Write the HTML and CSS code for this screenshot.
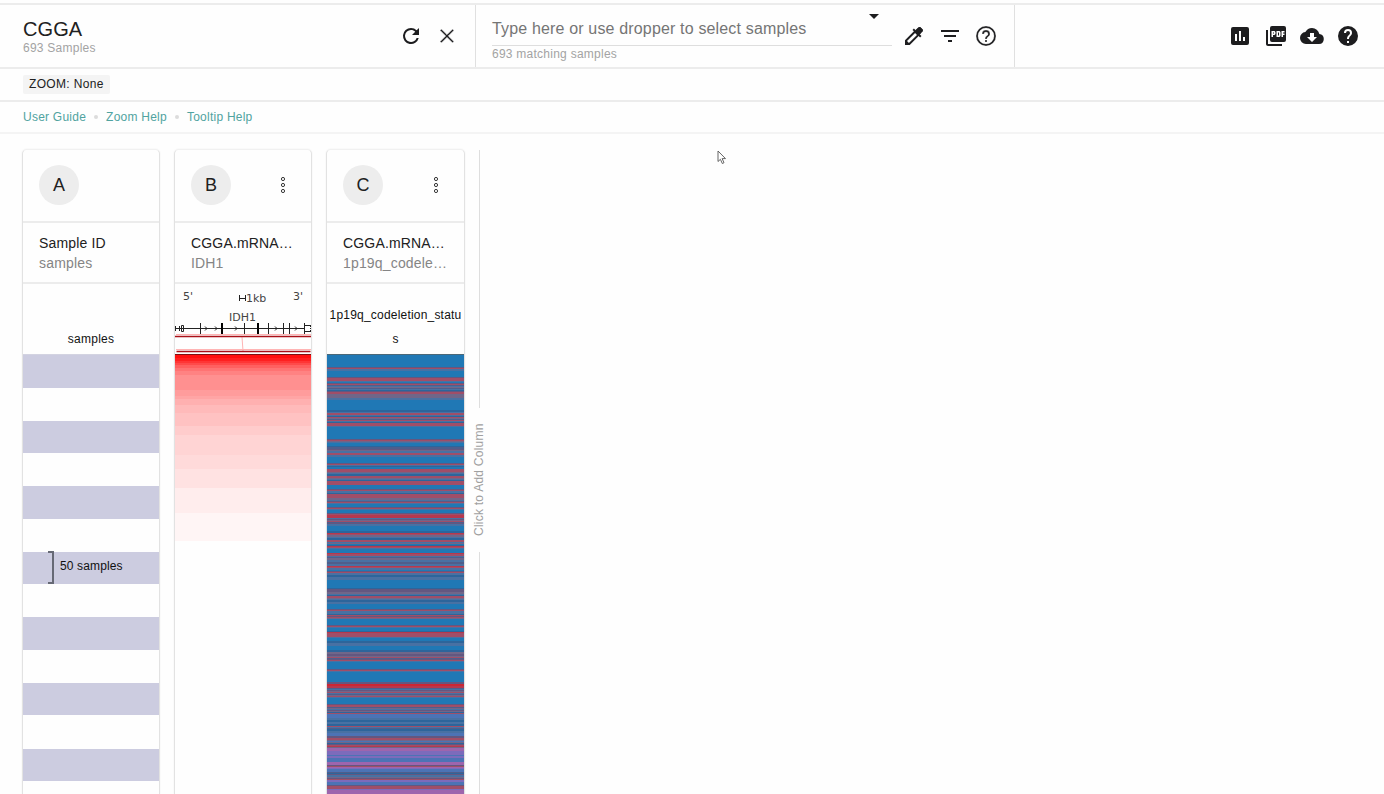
FILE: index.html
```html
<!DOCTYPE html>
<html lang="en">
<head>
<meta charset="utf-8">
<title>CGGA</title>
<link rel="stylesheet" href="styles.css">
</head>
<body>
<header class="appbar">
  <section class="cohort">
    <div class="cohort-text"><h1 class="cohort-name">CGGA</h1><div class="caption">693 Samples</div></div>
    <div class="icons">
      <svg class="icon" viewBox="0 0 24 24"><path d="M17.65 6.35A7.958 7.958 0 0 0 12 4a8 8 0 1 0 7.73 10h-2.08A6 6 0 1 1 12 6c1.66 0 3.14.69 4.22 1.78L13 11h7V4l-2.35 2.35z"/></svg>
      <svg class="icon close" viewBox="0 0 24 24"><path d="M19 6.41 17.59 5 12 10.59 6.41 5 5 6.41 10.59 12 5 17.59 6.41 19 12 13.41 17.59 19 19 17.59 13.41 12z"/></svg>
    </div>
  </section>
  <section class="search">
    <div class="field">
      <div class="field-input"><span class="placeholder">Type here or use dropper to select samples</span><i class="caret"></i></div>
      <div class="caption">693 matching samples</div>
    </div>
    <div class="icons">
      <svg class="icon" viewBox="0 0 24 24"><path d="M20.71 5.63l-2.34-2.34a1 1 0 0 0-1.41 0l-3.12 3.12-1.93-1.91-1.41 1.41 1.42 1.42L3 16.25V21h4.75l8.92-8.92 1.42 1.42 1.41-1.41-1.92-1.92 3.12-3.12c.4-.4.4-1.03.01-1.42zM6.92 19 5 17.08l8.06-8.06 1.92 1.92L6.92 19z"/><path d="M13 6.500l3.500-3.200h2l2 2v2L17.500 11z"/></svg>
      <svg class="icon" viewBox="0 0 24 24"><path d="M10 18h4v-2h-4v2zM3 6v2h18V6H3zm3 7h12v-2H6v2z"/></svg>
      <svg class="icon help" viewBox="0 0 24 24"><path d="M11 18h2v-2h-2v2zm1-16a10 10 0 1 0 0 20 10 10 0 0 0 0-20zm0 18a8 8 0 1 1 0-16 8 8 0 0 1 0 16zm0-14a4 4 0 0 0-4 4h2a2 2 0 1 1 4 0c0 2-3 1.75-3 5h2c0-2.25 3-2.5 3-5a4 4 0 0 0-4-4z"/></svg>
    </div>
  </section>
  <section class="actions">
    <svg class="icon" viewBox="0 0 24 24"><path d="M19 3H5a2 2 0 0 0-2 2v14a2 2 0 0 0 2 2h14a2 2 0 0 0 2-2V5a2 2 0 0 0-2-2zM9 17H7v-7h2v7zm4 0h-2V7h2v10zm4 0h-2v-4h2v4z"/></svg>
    <svg class="icon" viewBox="0 0 24 24"><path d="M20 2H8a2 2 0 0 0-2 2v12a2 2 0 0 0 2 2h12a2 2 0 0 0 2-2V4a2 2 0 0 0-2-2zm-8.5 7.5c0 .83-.67 1.5-1.5 1.5H9v2H7.500V7H10c.83 0 1.500.67 1.500 1.500v1zm5 2c0 .83-.67 1.500-1.500 1.500h-2.500V7H15c.83 0 1.500.67 1.500 1.500v3zm4-3H19v1h1.500V11H19v2h-1.500V7h3v1.500zM9 9.500h1v-1H9v1zM4 6H2v14c0 1.100.9 2 2 2h14v-2H4V6zm10 5.500h1v-3h-1v3z"/></svg>
    <svg class="icon" viewBox="0 0 24 24"><path d="M19.350 10.040A7.490 7.490 0 0 0 12 4C9.110 4 6.600 5.640 5.350 8.040A5.994 5.994 0 0 0 0 14a6 6 0 0 0 6 6h13a5 5 0 0 0 .35-9.960zM17 13l-5 5-5-5h3V9h4v4h3z"/></svg>
    <svg class="icon" viewBox="0 0 24 24"><path d="M12 2a10 10 0 1 0 0 20 10 10 0 0 0 0-20zm1 17h-2v-2h2v2zm2.070-7.750-.9.920C13.450 12.900 13 13.500 13 15h-2v-.5c0-1.100.45-2.100 1.170-2.830l1.240-1.260c.37-.36.59-.86.590-1.410a2 2 0 0 0-4 0H8a4 4 0 0 1 8 0c0 .88-.36 1.680-.93 2.250z"/></svg>
  </section>
</header>
<div class="zoombar"><span class="chip">ZOOM: None</span></div>
<nav class="links"><a>User Guide</a><i class="dot"></i><a>Zoom Help</a><i class="dot"></i><a>Tooltip Help</a></nav>
<main class="sheet">
  <article class="card">
    <div class="card-head"><span class="avatar">A</span></div>
    <div class="card-title"><div class="title">Sample ID</div><div class="subtitle">samples</div></div>
    <div class="legend legend-samples">samples</div>
    <div class="plot bands"><div class="scale"><i class="bracket"></i><span>50 samples</span></div></div>
  </article>
  <article class="card">
    <div class="card-head"><span class="avatar">B</span><svg class="menu" viewBox="0 0 6 18"><circle cx="3" cy="3" r="1.600"/><circle cx="3" cy="9" r="1.600"/><circle cx="3" cy="15" r="1.600"/></svg></div>
    <div class="card-title"><div class="title">CGGA.mRNA…</div><div class="subtitle">IDH1</div></div>
    <div class="legend">
      <svg class="gene" viewBox="175 284 136 70">
        <g class="gene-text"><text x="183" y="300">5'</text><text x="246" y="302">1kb</text><text x="293" y="300">3'</text><text x="229" y="321">IDH1</text></g>
        <path class="thin" d="M239.500 295v6M239 298.500h7M245.500 295v6M175 328.500h130M175.500 326v5M179.500 326v5M181.500 325.500h2v6h-2zM200.500 323v11M244.500 323v11M268.500 323v11M283.500 323v11M289.500 323v11M304.500 323v11M305 325.500h6M305 331.500h6M310.500 325v2M310.500 328v1M310.500 330v2M205 326.500l2 2-2 2M215 326.500l2 2-2 2M235 326.500l2 2-2 2M275 326.500l2 2-2 2M295 326.500l2 2-2 2"/>
        <path class="thick" d="M222 323v11M258 323v11"/>
        <path class="link" d="M242 337l1 14M176 334.500h135M176 349.500h135"/>
        <path class="edge" d="M175 336.500h136M176.500 351.500h134"/>
      </svg>
    </div>
    <div class="plot heat"></div>
  </article>
  <article class="card card-wide">
    <div class="card-head"><span class="avatar">C</span><svg class="menu" viewBox="0 0 6 18"><circle cx="3" cy="3" r="1.600"/><circle cx="3" cy="9" r="1.600"/><circle cx="3" cy="15" r="1.600"/></svg></div>
    <div class="card-title"><div class="title">CGGA.mRNA…</div><div class="subtitle">1p19q_codele…</div></div>
    <div class="legend legend-codeletion">1p19q_codeletion_statu<br>s</div>
    <canvas class="plot" id="codeletion" width="137" height="440"></canvas>
  </article>
  <aside class="add"><i class="rule rule-top"></i><span class="add-label">Click to Add Column</span><i class="rule rule-rest"></i></aside>
</main>
<svg class="pointer" viewBox="0 0 10 15"><path d="M1 1v10.500l2.400-2.200 1.900 4.200 1.700-.8-1.900-4.100H8.500z"/></svg>
<script src="app.js"></script>
</body>
</html>
```
FILE: styles.css
```css
* { box-sizing: border-box; }
body { margin: 0; width: 1384px; height: 794px; overflow: hidden; background: #fefefe; color: #212121; font-family: "Liberation Sans", Arial, sans-serif; padding-top: 3px; }
.appbar { display: flex; height: 66px; border-top: 2px solid #ececec; border-bottom: 2px solid #ececec; }
.cohort { width: 476px; border-right: 1px solid #e0e0e0; padding: 0 16px 0 23px; display: flex; justify-content: space-between; align-items: center; }
.cohort-name { margin: 0; font-size: 20px; line-height: 24px; font-weight: 400; letter-spacing: .1px; }
.caption { font-size: 12px; line-height: 14px; letter-spacing: .25px; color: #a3a3a3; }
.icons { display: flex; gap: 12px; }
.icon { width: 24px; height: 24px; fill: #1d1d1f; display: block; }
.close { stroke: #fefefe; stroke-width: .7; }
.help { stroke: #fefefe; stroke-width: .25; }
.search { width: 539px; border-right: 1px solid #e0e0e0; padding: 0 16px; display: flex; align-items: center; gap: 10px; }
.field { width: 400px; align-self: stretch; }
.field-input { height: 41px; border-bottom: 1px solid #dedede; display: flex; justify-content: space-between; padding: 9px 13px 0 0; margin-bottom: 1px; }
.placeholder { font-size: 16px; line-height: 29px; letter-spacing: .16px; color: #757575; }
.caret { width: 0; height: 0; border: 5px solid transparent; border-top-color: #1d1d1f; border-bottom: 0; }
.actions { flex: 1; display: flex; justify-content: flex-end; align-items: center; gap: 12px; padding-right: 24px; }
.zoombar { height: 33px; border-bottom: 2px solid #ececec; padding: 6px 23px; display: flex; }
.chip { height: 19px; line-height: 19px; padding: 0 6px; background: #f4f4f4; border-radius: 2px; font-size: 12px; letter-spacing: .34px; }
.links { height: 32px; border-bottom: 2px solid #f4f4f4; padding: 0 23px; display: flex; align-items: center; font-size: 12px; letter-spacing: .24px; color: #50a3a0; }
.dot { width: 4px; height: 4px; border-radius: 50%; background: #dcdcdc; margin: 0 8px; }
.sheet { display: flex; height: 660px; padding: 15px 0 0 22px; }
.card { width: 138px; margin-right: 14px; border: 1px solid #e2e2e2; border-top-color: #f1f1f1; border-radius: 5px 5px 0 0; box-shadow: 0 0 2px #eee; background: #fefefe; }
.card-wide { width: 139px; }
.card-head { height: 73px; padding: 0 25px 1px 16px; display: flex; align-items: center; justify-content: space-between; border-bottom: 2px solid #ececec; }
.avatar { width: 40px; height: 40px; border-radius: 50%; background: #ededed; display: flex; align-items: center; justify-content: center; font-size: 18px; }
.menu { width: 6px; height: 18px; fill: #fff; stroke: #222; stroke-width: .9; }
.card-title { height: 61px; padding: 10px 0 0 16px; border-bottom: 2px solid #ececec; font-size: 14px; line-height: 20px; letter-spacing: .17px; white-space: nowrap; }
.subtitle { color: #858585; }
.legend { height: 70px; font-size: 12px; text-align: center; color: #111; letter-spacing: .25px; }
.legend-samples { line-height: 24px; padding-top: 43px; }
.legend-codeletion { line-height: 24px; padding-top: 19px; white-space: nowrap; letter-spacing: .2px; }
.plot { height: 440px; display: block; }
.bands { border-top: 1px solid #d3d3e1; background: repeating-linear-gradient(#cccce0 0 32.500px, #fefefe 32.500px 65.600px); padding-top: 196px; }
.scale { display: flex; align-items: center; height: 33px; padding-left: 25px; font-size: 12px; letter-spacing: .13px; color: #111; }
.bracket { width: 6px; height: 33px; border: 2px solid #666975; border-left: 0; margin-right: 6px; }
.scale span { padding-bottom: 3px; }
.gene { width: 136px; height: 70px; display: block; }
.gene-text { font: 11px "DejaVu Sans", sans-serif; fill: #444; letter-spacing: 0; }
.thin { fill: none; stroke: #222; stroke-width: 1; }
.thick { stroke: #000; stroke-width: 2; }
.link { fill: none; stroke: #ffb4b4; stroke-width: 1; }
.edge { stroke: #aa1018; stroke-width: 1.600; }
.heat { border-top: 1px solid #7c1212; background: linear-gradient(#ff1010 3px, #ff2020 3px 6px, #ff3535 6px 8px, #ff4a4a 8px 10px, #ff6060 10px 13px, #ff7373 13px 16px, #ff8282 16px 20px, #ff9090 20px 35px, #ff9c9c 35px 41px, #ffa5a5 41px 44px, #ffb0b0 44px 50px, #ffbaba 50px 58px, #ffc2c2 58px 71px, #ffcccc 71px 80px, #ffd4d4 80px 100px, #ffdada 100px 114px, #ffe2e2 114px 133px, #ffeded 133px 158px, #fff5f5 158px 186px, #fefefe 186px); }
.add { width: 16px; display: flex; flex-direction: column; align-items: center; margin-left: -8px; }
.rule { width: 1px; background: #dedede; }
.rule-top { height: 258px; margin-top: 1px; }
.rule-rest { flex: 1; }
.add-label { height: 144px; writing-mode: vertical-rl; transform: rotate(180deg); display: flex; align-items: center; justify-content: center; font-size: 12px; line-height: 14px; letter-spacing: .24px; color: #a0a0a0; white-space: nowrap; }
.pointer { position: absolute; left: 717px; top: 150px; width: 10px; height: 15px; fill: #fff; stroke: #555; stroke-width: .9; }
```
FILE: app.js
```js
// Status colours, followed by run lengths of consecutive sample rows.
const colors = { k: '#4b6878', b: '#2078b5', d: '#2d659b', s: '#4871a3', n: '#4c73b5', g: '#4e5e8c', v: '#635780', p: '#706689', r: '#a04e68', R: '#b6384e', X: '#cb2634', u: '#7c6bbb', m: '#9d65ad' };
const runs = `k1 b12 v1 r1 s2 b6 v1 r3 s1 b1 v1 r1 g1 s1 p1 g1 s1 d1 v1 r2 p4 s2 b10 d2 s1 r2 s1 d1 r1 p1 g1 r1 s1 d1 r3 s1
b12 v1 r1 p1 s1 b3 d1 g2 v1 p1 s2 r2 s2 b6 v1 r1 s1 d1 b2 r3 p1 s1 d2 r2 p1 s1 d1 r4 b4 v1 r1 s2 d1 r4 p2
s1 v1 r1 s1 b3 v1 r1 s1 b3 v1 r1 R3 s1 v1 p1 r1 g1 v1 s2 b5 d2 R1 r1 p2 s1 d2 r2 s1 p1 b1 d1 R1 r1 s1 b4 R1 r2 s1 g1 p2 s2 g2 s2 R1 r1 s2 b1 v1 r1 s2 d2 s3 b8
d1 v3 p2 s1 d1 r2 p1 s1 d2 s2 b5 v1 r1 s3 d1 r1 v1 r1 p1 b6 v1 r1 s1 b3 d1 R1 r4 s1 b3 d2 s2
s1 b4 d2 p2 v2 p1 r1 g1 v1 r1 s1 b7 v1 r1 s1 b10 v2 X2 R2 g1 s1 v1 p1 r1 s1 g1 p1 r1 s1 b6 v1 r2 g1 p1 s1 v1 p1 d1 r1 n4 s2 d2 s2 d2 r1 s1 g1 d2 s2 n3 v2 r2 p1 n1 p1 d1 v1 r1 R1 p1
m3 u4 n1 u2 n4 m3 v1 r1 m1 u1 n3 g1 d1 v1 s2 p1 v1 r1 u2 n2 n1 v1 r3 u1 m6`;
const ctx = document.getElementById('codeletion').getContext('2d');
let y = 0;
for (const run of runs.split(/\s+/)) {
  const height = Number(run.slice(1));
  ctx.fillStyle = colors[run[0]];
  ctx.fillRect(0, y, 137, height);
  y += height;
}
```
